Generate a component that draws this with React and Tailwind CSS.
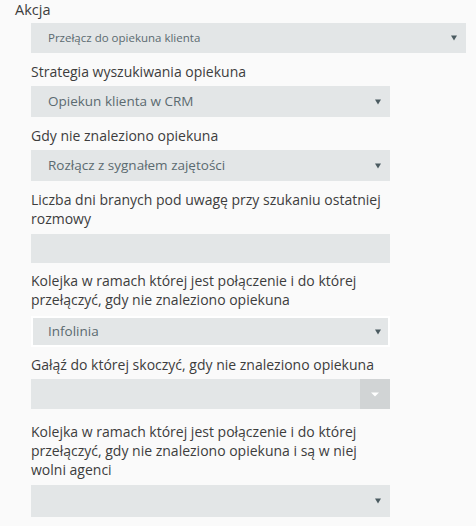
import React from "react";

const Caret = () => (
  <svg width="6" height="6" viewBox="0 0 6 6" className="shrink-0">
    <path d="M0 0.5 H6 L3 5.5 Z" fill="#4b5b61" />
  </svg>
);

const Select = ({ value, small, focused, className = "" }) => (
  <div
    className={`flex items-center justify-between bg-[#e3e6e7] ${
      focused ? "border-2 border-white pl-[15px] pr-[7px]" : "pl-[17px] pr-[9px]"
    } ${className}`}
  >
    <span
      className={`${small ? "text-[11.5px]" : "text-[13.5px]"} text-[#5b6a70] leading-none`}
    >
      {value}
    </span>
    <Caret />
  </div>
);

const Label = ({ children, className = "" }) => (
  <div className={`text-[14px] leading-[19px] text-[#3d3d3d] ${className}`}>
    {children}
  </div>
);

export default function App() {
  return (
    <div
      className="min-h-[526px] w-[476px] bg-[#fafafa]"
      style={{ fontFamily: '"Open Sans", "Noto Sans", sans-serif' }}
    >
      <div className="pl-[15px] text-[14.5px] leading-[19px] text-[#3d3d3d]">Akcja</div>
      <div className="pl-[31px] pr-[10px]">
        <Select value="Przełącz do opiekuna klienta" small className="mt-[4px] h-[30px]" />
      </div>

      <div className="pl-[31px] w-[390px]">
        <Label className="mt-[9px]">Strategia wyszukiwania opiekuna</Label>
        <Select value="Opiekun klienta w CRM" className="mt-[5px] h-[31px]" />

        <Label className="mt-[9px]">Gdy nie znaleziono opiekuna</Label>
        <Select value="Rozłącz z sygnałem zajętości" className="mt-[5px] h-[31px]" />

        <Label className="mt-[9px]">
          Liczba dni branych pod uwagę przy szukaniu ostatniej rozmowy
        </Label>
        <div className="mt-[6px] h-[29px] bg-[#e3e6e7]" />

        <Label className="mt-[8px]">
          Kolejka w ramach której jest połączenie i do której przełączyć, gdy nie znaleziono
          opiekuna
        </Label>
        <Select value="Infolinia" focused className="mt-[7px] h-[31px]" />

        <Label className="mt-[8px]">Gałąź do której skoczyć, gdy nie znaleziono opiekuna</Label>
        <div className="mt-[5px] flex h-[30px] bg-[#e3e6e7]">
          <div className="flex-1" />
          <div className="flex w-[30px] items-center justify-center bg-[#d1d4d5]">
            <svg width="8" height="5" viewBox="0 0 8 5">
              <path d="M0 0.5 H8 L4 4.5 Z" fill="#ffffff" />
            </svg>
          </div>
        </div>

        <Label className="mt-[13px]">
          Kolejka w ramach której jest połączenie i do której przełączyć, gdy nie znaleziono
          opiekuna i są w niej wolni agenci
        </Label>
        <Select value="" className="mt-[6px] h-[32px]" />
      </div>
    </div>
  );
}
